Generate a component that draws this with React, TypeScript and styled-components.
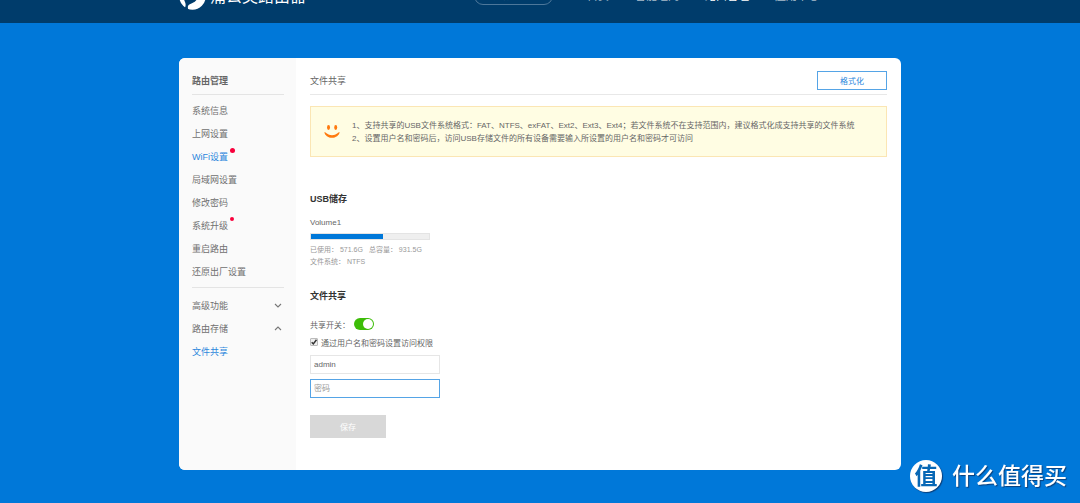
import React, { useState } from 'react';
import styled, { createGlobalStyle } from 'styled-components';

const GlobalStyle = createGlobalStyle`
  * { box-sizing: border-box; }
  body {
    margin: 0;
    background: #0078d9;
    color: #666;
    font-family: "Liberation Sans", "Noto Sans CJK SC", sans-serif;
    font-size: 9px;
  }
  button, input { font-family: inherit; }
  h2, h3, p, ul { margin: 0; padding: 0; }
`;

const Header = styled.header`
  display: flex;
  justify-content: center;
  align-items: flex-end;
  height: 23px;
  overflow: hidden;
  background: #003c6b;
`;

const HeaderInner = styled.div`
  display: flex;
  align-items: flex-end;
  width: 90%;
  max-width: 722px;
  padding-bottom: 13px;
`;

const Brand = styled.a`
  display: flex;
  align-items: center;
  gap: 4px;
  color: #fff;
  font-size: 16px;
  line-height: 24px;
  text-decoration: none;
  white-space: nowrap;
`;

const Nav = styled.nav`
  display: flex;
  align-items: center;
  gap: 26px;
  margin-left: auto;
  padding-right: 82px;
  padding-bottom: 5px;
`;

const NavLink = styled.a<{ $active?: boolean }>`
  color: ${(p) => (p.$active ? '#fff' : '#a9bccb')};
  font-size: 11px;
  line-height: 16px;
  text-decoration: none;
  white-space: nowrap;
`;

const PillLink = styled(NavLink)`
  margin-right: 8px;
  padding: 0 7px;
  border: 1px solid #4d779a;
  border-radius: 9px;
  font-size: 9px;
`;

const Page = styled.main`
  display: flex;
  justify-content: center;
  padding: 35px 0 33px;
`;

const Card = styled.div`
  display: flex;
  width: 90%;
  max-width: 722px;
  min-height: 412px;
  overflow: hidden;
  border-radius: 6px;
  background: #fff;
`;

const Sidebar = styled.aside`
  flex: 0 0 117px;
  padding: 12px 12px 0 13px;
  background: #fafafa;
`;

const SideTitle = styled.h2`
  height: 25px;
  border-bottom: 1px solid #e4e4e4;
  font-size: 9px;
  line-height: 22px;
`;

const SideList = styled.ul`
  padding: 4px 0;
  list-style: none;
  & + & { padding-top: 6px; border-top: 1px solid #e4e4e4; }
`;

const SideLink = styled.a<{ $active?: boolean }>`
  display: flex;
  align-items: center;
  justify-content: space-between;
  height: 23px;
  color: ${(p) => (p.$active ? '#2a86dc' : '#707070')};
  font-size: 9px;
  text-decoration: none;
`;

const SideLabel = styled.span`
  position: relative;
`;

const Dot = styled.i<{ $size: number }>`
  position: absolute;
  top: -2px;
  left: calc(100% + 2px);
  width: ${(p) => p.$size}px;
  height: ${(p) => p.$size}px;
  border-radius: 50%;
  background: #f8003c;
`;

const Content = styled.section`
  flex: 1;
  min-width: 0;
  padding: 12px 14px 32px;
`;

const ContentHead = styled.div`
  display: flex;
  align-items: flex-start;
  justify-content: space-between;
  height: 25px;
  border-bottom: 1px solid #e8e8e8;
`;

const ContentTitle = styled.h2`
  font-size: 9px;
  font-weight: 400;
  line-height: 22px;
`;

const OutlineButton = styled.button`
  width: 70px;
  height: 19px;
  margin-top: 1px;
  padding: 0;
  border: 1px solid #55a4e6;
  background: #fff;
  color: #2a86dc;
  font-size: 8px;
`;

const Notice = styled.div`
  display: flex;
  align-items: center;
  gap: 12px;
  min-height: 51px;
  margin-top: 11px;
  padding: 0 13px;
  border: 1px solid #fbe6b4;
  background: #fffde3;
`;

const NoticeText = styled.p`
  font-size: 8px;
  line-height: 13px;
`;

const SectionTitle = styled.h3`
  color: #333;
  font-size: 9px;
  line-height: 14px;
`;

const Storage = styled.div`
  margin-top: 35px;
`;

const VolumeName = styled.p`
  margin-top: 11px;
  font-size: 8px;
  line-height: 12px;
`;

const Meter = styled.div`
  width: 120px;
  height: 7px;
  margin-top: 4px;
  border: 1px solid #e4e4e4;
  background: #efefef;
`;

const MeterFill = styled.div`
  height: 100%;
  background: #0078d9;
`;

const Detail = styled.p`
  display: flex;
  gap: 6px;
  color: #999;
  font-size: 7px;
  line-height: 12px;
`;

const Details = styled.div`
  margin-top: 4px;
`;

const Form = styled.form`
  display: flex;
  flex-direction: column;
  align-items: flex-start;
  margin-top: 21px;
`;

const SwitchRow = styled.label`
  display: flex;
  align-items: center;
  gap: 4px;
  height: 12px;
  margin-top: 15px;
  font-size: 8px;
`;

const Switch = styled.input`
  appearance: none;
  display: flex;
  width: 20px;
  height: 12px;
  margin: 0;
  padding: 1px;
  border-radius: 6px;
  background: #3dbd08;
  &::before {
    content: "";
    width: 10px;
    height: 10px;
    border-radius: 50%;
    background: #fff;
  }
  &:checked { justify-content: flex-end; }
  &:not(:checked) { background: #bbb; }
`;

const CheckRow = styled.label`
  display: flex;
  align-items: center;
  gap: 3px;
  height: 12px;
  margin: 6px 0 2px;
  font-size: 8px;
`;

const CheckWrap = styled.span`
  display: grid;
  & > * { grid-area: 1 / 1; }
  svg { pointer-events: none; }
  input:not(:checked) + svg { visibility: hidden; }
`;

const Check = styled.input`
  appearance: none;
  width: 8px;
  height: 8px;
  margin: 0;
  border: 1px solid #bbb;
  border-radius: 1px;
  background: #eee;
`;

const Field = styled.input`
  width: 130px;
  height: 19px;
  margin-top: 5px;
  padding: 0 3px;
  border: 1px solid #e6e6e6;
  outline: 0;
  background: #fff;
  color: #666;
  font-size: 8px;
  &::placeholder { color: #999; }
  &:focus { border-color: #55a4e6; }
`;

const SaveButton = styled.button`
  width: 76px;
  height: 23px;
  margin-top: 17px;
  border: 0;
  background: #d8d8d8;
  color: #fff;
  font-size: 8px;
`;

const Watermark = styled.div`
  position: fixed;
  right: 13px;
  bottom: 11px;
  display: flex;
  align-items: center;
  gap: 10px;
  color: #fff;
  font-size: 23px;
  font-weight: 500;
  line-height: 32px;
  text-shadow: 1px 1px 1px #0a3f7a;
`;

const Seal = styled.span`
  display: flex;
  align-items: center;
  justify-content: center;
  width: 32px;
  height: 32px;
  border-radius: 50%;
  background: #fff;
  box-shadow: 1px 1px 1px #0a3f7a;
  color: #0767b5;
  font-size: 23px;
  font-weight: 700;
  text-shadow: none;
`;

const Chevron = ({ up = false }: { up?: boolean }) => (
  <svg width="12" height="8" viewBox="0 0 12 8" fill="none" stroke="#777" strokeWidth="1.1">
    <path d={up ? 'M3 5 6 2 9 5' : 'M3 2 6 5 9 2'} />
  </svg>
);

const sideItems = [
  { label: '系统信息' },
  { label: '上网设置' },
  { label: 'WiFi设置', active: true, dot: 5 },
  { label: '局域网设置' },
  { label: '修改密码' },
  { label: '系统升级', dot: 4 },
  { label: '重启路由' },
  { label: '还原出厂设置' },
];

export default function App() {
  const [shared, setShared] = useState(true);
  const [secured, setSecured] = useState(true);
  const [user, setUser] = useState('admin');
  const [password, setPassword] = useState('');

  return (
    <>
      <GlobalStyle />
      <Header>
        <HeaderInner>
          <Brand href="#">
            <svg width="27" height="27" viewBox="0 0 27 27">
              <circle cx="13.5" cy="13.5" r="13.2" fill="#fff" />
              <path d="M4 10c1-4 5-6 9-6 5 0 7 4 6 9-.6 4-3 6-6 7.200-2.500 1-4.200 2-4.200 3.800l.4 3L5.500 25.500c1.300-2 1.500-4 .5-6.500C4.800 16 3.400 13 4 10z" fill="#003c6b" />
            </svg>
            蒲公英路由器
          </Brand>
          <Nav>
            <PillLink href="#">贝锐旗下云管理</PillLink>
            <NavLink href="#">首页</NavLink>
            <NavLink href="#">智能组网</NavLink>
            <NavLink href="#" $active>路由管理</NavLink>
            <NavLink href="#">应用中心</NavLink>
          </Nav>
        </HeaderInner>
      </Header>
      <Page>
        <Card>
          <Sidebar>
            <SideTitle>路由管理</SideTitle>
            <SideList>
              {sideItems.map((item) => (
                <li key={item.label}>
                  <SideLink href="#" $active={item.active}>
                    <SideLabel>
                      {item.label}
                      {item.dot && <Dot $size={item.dot} />}
                    </SideLabel>
                  </SideLink>
                </li>
              ))}
            </SideList>
            <SideList>
              <li><SideLink href="#">高级功能<Chevron /></SideLink></li>
              <li><SideLink href="#">路由存储<Chevron up /></SideLink></li>
              <li><SideLink href="#" $active>文件共享</SideLink></li>
            </SideList>
          </Sidebar>
          <Content>
            <ContentHead>
              <ContentTitle>文件共享</ContentTitle>
              <OutlineButton type="button">格式化</OutlineButton>
            </ContentHead>
            <Notice>
              <svg width="16" height="13" viewBox="0 0 16 13" fill="#ff7a0f">
                <ellipse cx="4.500" cy="2.500" rx="1.500" ry="2.400" />
                <ellipse cx="11.700" cy="2.500" rx="1.500" ry="2.400" />
                <path d="M.3 7.200c1 0 1.500.4 2.200 1 3 2.600 8 2.600 11 0 .7-.6 1.200-1 2.200-1-.6 3-3.800 5.600-7.700 5.600S.9 10.200.3 7.200z" />
              </svg>
              <NoticeText>
                1、支持共享的USB文件系统格式：FAT、NTFS、exFAT、Ext2、Ext3、Ext4；若文件系统不在支持范围内，建议格式化成支持共享的文件系统
                <br />
                2、设置用户名和密码后，访问USB存储文件的所有设备需要输入所设置的用户名和密码才可访问
              </NoticeText>
            </Notice>
            <Storage>
              <SectionTitle>USB储存</SectionTitle>
              <VolumeName>Volume1</VolumeName>
              <Meter>
                <MeterFill style={{ width: `${(571.6 / 931.5) * 100}%` }} />
              </Meter>
              <Details>
                <Detail><span>已使用： 571.6G</span><span>总容量： 931.5G</span></Detail>
                <Detail>文件系统： NTFS</Detail>
              </Details>
            </Storage>
            <Form onSubmit={(e) => e.preventDefault()}>
              <SectionTitle>文件共享</SectionTitle>
              <SwitchRow>
                共享开关：
                <Switch type="checkbox" checked={shared} onChange={(e) => setShared(e.target.checked)} />
              </SwitchRow>
              <CheckRow>
                <CheckWrap>
                  <Check type="checkbox" checked={secured} onChange={(e) => setSecured(e.target.checked)} />
                  <svg width="8" height="8" viewBox="0 0 8 8" fill="none" stroke="#333" strokeWidth="1.5">
                    <path d="M1.700 4.200 3.300 5.900 6.500 1.700" />
                  </svg>
                </CheckWrap>
                通过用户名和密码设置访问权限
              </CheckRow>
              <Field aria-label="用户名" value={user} onChange={(e) => setUser(e.target.value)} />
              <Field
                aria-label="密码"
                type="password"
                placeholder="密码"
                autoFocus
                value={password}
                onChange={(e) => setPassword(e.target.value)}
              />
              <SaveButton type="submit">保存</SaveButton>
            </Form>
          </Content>
        </Card>
      </Page>
      <Watermark>
        <Seal>值</Seal>
        什么值得买
      </Watermark>
    </>
  );
}
